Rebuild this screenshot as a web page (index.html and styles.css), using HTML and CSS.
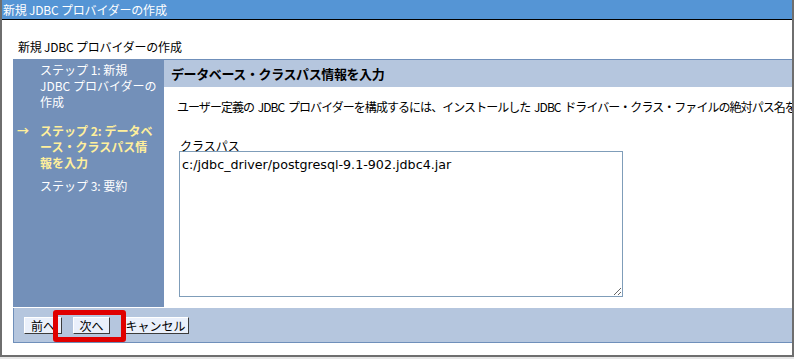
FILE: index.html
```html
<!DOCTYPE html>
<html lang="ja">
<head>
<meta charset="utf-8">
<link rel="stylesheet" href="styles.css">
</head>
<body>
<div class="window">
  <div class="titlebar">新規 JDBC プロバイダーの作成</div>
  <div class="page">
    <div class="heading">新規 JDBC プロバイダーの作成</div>
    <div class="panel">
      <div class="panel-row">
        <nav class="steps">
          <div class="step first">ステップ 1: 新規<br>JDBC プロバイダーの<br>作成</div>
          <div class="step current"><span class="arrow">→</span>ステップ 2: データベ<br>ース・クラスパス情<br>報を入力</div>
          <div class="step">ステップ 3: 要約</div>
        </nav>
        <main class="main">
          <div class="main-header">データベース・クラスパス情報を入力</div>
          <div class="main-body">
            <p class="desc">ユーザー定義の JDBC プロバイダーを構成するには、インストールした JDBC ドライバー・クラス・ファイルの絶対パス名を指定します。</p>
            <label class="field-label" for="cp">クラスパス</label>
            <textarea id="cp" class="classpath">c:/jdbc_driver/postgresql-9.1-902.jdbc4.jar</textarea>
          </div>
        </main>
      </div>
      <div class="button-bar">
        <button class="btn btn-prev">前へ</button>
        <button class="btn btn-next">次へ</button>
        <button class="btn btn-cancel">キャンセル</button>
        <span class="highlight"></span>
      </div>
    </div>
  </div>
</div>
</body>
</html>
```
FILE: styles.css
```css
html, body {
  margin: 0;
  padding: 0;
  background: #e6e6e6;
}
body {
  font-family: "Noto Sans CJK JP", "Noto Sans", sans-serif;
  font-size: 12px;
  color: #000;
}
.window {
  width: 790px;
  height: 355px;
  background: #fff;
  border-left: 2px solid #6e6e6e;
  border-right: 2px solid #6e6e6e;
  border-bottom: 2px solid #6e6e6e;
  overflow: hidden;
}
.titlebar {
  height: 19px;
  line-height: 19px;
  background: #5595d5;
  color: #fff;
  padding-left: 1px;
  border-bottom: 1px solid #000;
  white-space: nowrap;
  letter-spacing: -0.2px;
}
.page {
  padding: 19px 0 0 11px;
}
.heading {
  height: 20px;
  line-height: 16px;
  padding-left: 5px;
  letter-spacing: -0.2px;
}
.panel {
  position: relative;
}
.panel-row {
  display: flex;
  height: 249px;
}
.steps {
  width: 151px;
  flex: none;
  background: #7390b9;
  color: #fff;
  padding: 3px 0 0 0;
  box-sizing: border-box;
  height: 248px;
}
.step {
  position: relative;
  padding-left: 27px;
  line-height: 16px;
  margin-bottom: 7px;
}
.step.first {
  margin-bottom: 13px;
}
.step.current {
  color: #ffef9c;
  font-weight: bold;
}
.arrow {
  position: absolute;
  left: 4px;
  top: 0;
}
.main {
  flex: 1;
  min-width: 0;
  border-top: 1px solid #6f8fba;
}
.main-header {
  height: 27px;
  line-height: 27px;
  background: #b5c6de;
  font-weight: bold;
  font-size: 13px;
  padding-left: 7px;
  white-space: nowrap;
  letter-spacing: -0.4px;
}
.main-body {
  padding: 0 0 0 13px;
}
.desc {
  margin: 12px 0 0 0;
  line-height: 16px;
  white-space: nowrap;
  overflow: hidden;
  letter-spacing: -0.95px;
  word-spacing: 2px;
}
.field-label {
  display: block;
  margin-top: 26px;
  padding-left: 3px;
  line-height: 10px;
}
.classpath {
  display: block;
  box-sizing: border-box;
  width: 444px;
  height: 146px;
  margin-left: 2px;
  border: 1px solid #7f9db9;
  padding: 5px 2px;
  font-family: "DejaVu Sans", sans-serif;
  font-size: 12.7px;
  line-height: 15px;
  color: #000;
  resize: both;
}
.button-bar {
  position: relative;
  background: #b5c6de;
  border-left: 1px solid #6f8fba;
  border-bottom: 1px solid #6f8fba;
  display: flex;
  align-items: flex-start;
  gap: 11px;
  padding: 9px 0 0 10px;
  box-sizing: border-box;
  height: 35px;
}
.btn {
  font-family: "Noto Sans CJK JP", sans-serif;
  font-size: 12px;
  height: 17px;
  line-height: 13px;
  padding: 0;
  white-space: nowrap;
  background: #eaf0fb;
  border: 1px solid;
  border-color: #ffffff #3c3c3c #3c3c3c #ffffff;
  color: #000;
}
.btn-prev {
  width: 38px;
}
.btn-next {
  width: 37px;
}
.btn-cancel {
  width: 67px;
  margin-left: 1px;
}
.highlight {
  position: absolute;
  left: 39px;
  top: 2px;
  width: 63px;
  height: 22px;
  border: 5px solid #e00000;
  border-radius: 3px;
}
```
